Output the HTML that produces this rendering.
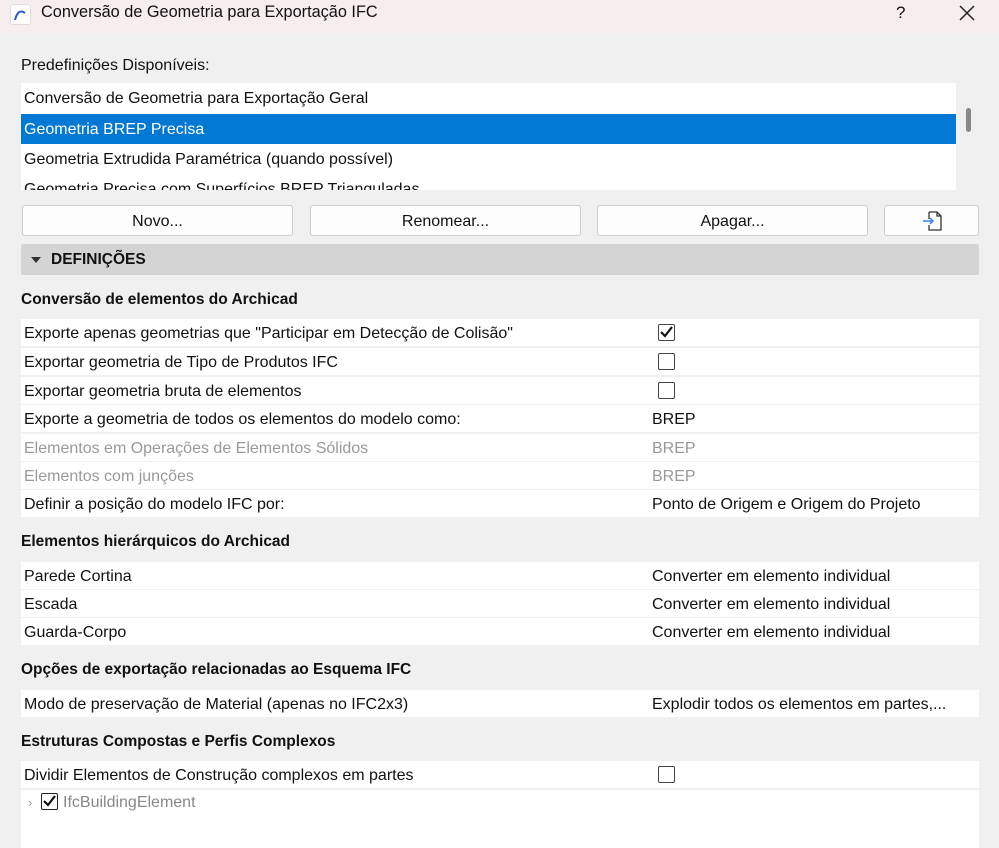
<!DOCTYPE html>
<html><head><meta charset="utf-8"><style>
*{margin:0;padding:0;box-sizing:border-box}
body{width:999px;height:848px;background:#f0f0f0;font-family:"Liberation Sans",sans-serif;font-size:16px;color:#111;position:relative;overflow:hidden}
.a{position:absolute;white-space:nowrap}
.title{left:0;top:0;width:999px;height:33px;background:#f6eeee}
.row{position:absolute;left:21px;width:958px;height:28px;background:#fff;line-height:30px;padding-left:3px;border-top:1px solid #efefef}
.row .v{position:absolute;left:631px;top:0}
.gray{color:#999}
.cb{position:absolute;left:637px;top:5px;width:17px;height:17px;border:1.5px solid #444;border-radius:2px;background:#fff}
.h{position:absolute;left:21px;font-weight:bold;font-size:15.5px}
.btn{position:absolute;top:205px;height:31px;background:#fdfdfd;border:1px solid #ccc;border-radius:3px;text-align:center;line-height:31px;font-size:16px}
.li{position:absolute;left:21px;width:935px;height:30px;line-height:32px;padding-left:3px;font-size:16px}
</style></head><body>
<div class="a title"></div>
<div class="a" style="left:10px;top:4px;width:21px;height:21px;border:1px solid #ddd;border-radius:3px;background:#fff"><svg width="19" height="19"><path d="M4 15 Q7 3 14 8" stroke="#2a5bd7" stroke-width="2" fill="none"/></svg></div>
<div class="a" style="left:41px;top:3px;font-size:16.3px">Conversão de Geometria para Exportação IFC</div>
<div class="a" style="left:896px;top:3px;font-size:17px">?</div>
<svg class="a" style="left:958px;top:4px" width="18" height="18"><path d="M2 2L16 16M16 2L2 16" stroke="#222" stroke-width="1.5"/></svg>
<div class="a" style="left:21px;top:57px">Predefinições Disponíveis:</div>
<div class="a" style="left:21px;top:83px;width:935px;height:107px;background:#fff;overflow:hidden">
<div class="li" style="left:0;top:0">Conversão de Geometria para Exportação Geral</div>
<div class="li" style="left:0;top:31px;background:#0078d4;color:#fff">Geometria BREP Precisa</div>
<div class="li" style="left:0;top:61px">Geometria Extrudida Paramétrica (quando possível)</div>
<div class="li" style="left:0;top:91px">Geometria Precisa com Superfícios BREP Trianguladas</div>
</div>
<div class="a" style="left:966px;top:108px;width:5px;height:24px;background:#888;border-radius:3px"></div>
<div class="btn" style="left:22px;width:271px">Novo...</div>
<div class="btn" style="left:310px;width:271px">Renomear...</div>
<div class="btn" style="left:597px;width:271px">Apagar...</div>
<div class="btn" style="left:884px;width:95px"><svg width="24" height="24" style="margin-top:3px"><path d="M9 3h8l4 4v14H9v-5M9 10V3M17 3v4h4" stroke="#333" stroke-width="1.3" fill="none"/><path d="M3 12h10M10 9l3 3-3 3" stroke="#3b82f6" stroke-width="1.5" fill="none"/></svg></div>
<div class="a" style="left:21px;top:244px;width:958px;height:31px;background:#d4d4d4;border-radius:2px"></div>
<div class="a" style="left:31px;top:257px;width:0;height:0;border-left:5px solid transparent;border-right:5px solid transparent;border-top:6px solid #333"></div>
<div class="a" style="left:51px;top:251px;font-weight:bold;font-size:15.5px">DEFINIÇÕES</div>
<div class="h" style="top:291px">Conversão de elementos do Archicad</div>
<div class="row" style="top:318px">Exporte apenas geometrias que "Participar em Detecção de Colisão"<div class="cb"><svg width="15" height="15" style="position:absolute;left:0;top:0"><path d="M2 7l4 4 7-9" stroke="#111" stroke-width="2.2" fill="none"/></svg></div></div>
<div class="row" style="top:347px">Exportar geometria de Tipo de Produtos IFC<div class="cb"></div></div>
<div class="row" style="top:376px">Exportar geometria bruta de elementos<div class="cb"></div></div>
<div class="row" style="top:404px">Exporte a geometria de todos os elementos do modelo como:<span class="v">BREP</span></div>
<div class="row gray" style="top:433px">Elementos em Operações de Elementos Sólidos<span class="v">BREP</span></div>
<div class="row gray" style="top:461px">Elementos com junções<span class="v">BREP</span></div>
<div class="row" style="top:489px">Definir a posição do modelo IFC por:<span class="v">Ponto de Origem e Origem do Projeto</span></div>
<div class="h" style="top:533px">Elementos hierárquicos do Archicad</div>
<div class="row" style="top:561px">Parede Cortina<span class="v">Converter em elemento individual</span></div>
<div class="row" style="top:589px">Escada<span class="v">Converter em elemento individual</span></div>
<div class="row" style="top:617px">Guarda-Corpo<span class="v">Converter em elemento individual</span></div>
<div class="h" style="top:661px">Opções de exportação relacionadas ao Esquema IFC</div>
<div class="row" style="top:689px">Modo de preservação de Material (apenas no IFC2x3)<span class="v">Explodir todos os elementos em partes,...</span></div>
<div class="h" style="top:733px">Estruturas Compostas e Perfis Complexos</div>
<div class="row" style="top:760px">Dividir Elementos de Construção complexos em partes<div class="cb"></div></div>
<div class="a" style="left:21px;top:789px;width:958px;height:59px;background:#fff;border-top:1px solid #efefef"></div>
<div class="a" style="left:28px;top:795px;color:#999;font-size:13px">›</div>
<div class="a" style="left:41px;top:793px;width:17px;height:17px;border:1.5px solid #222;border-radius:2px;background:#fff"><svg width="15" height="15" style="position:absolute;left:0;top:0"><path d="M2 7l4 4 7-9" stroke="#111" stroke-width="2.2" fill="none"/></svg></div>
<div class="a" style="left:63px;top:794px;color:#888">IfcBuildingElement</div>
</body></html>
